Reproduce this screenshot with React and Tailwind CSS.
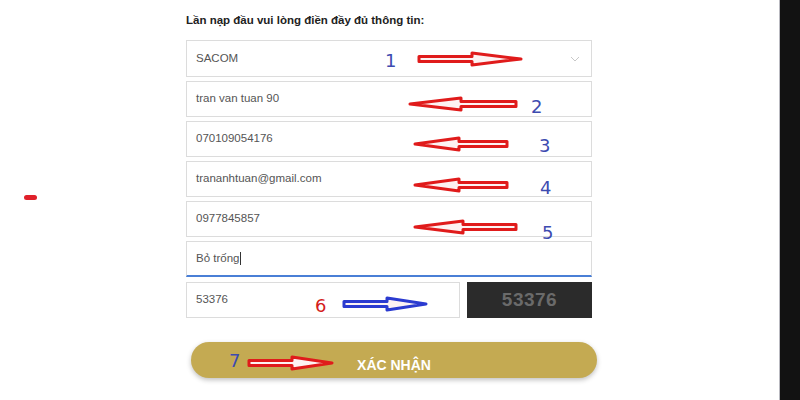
import React from 'react'

function Arrow({ dir = 'right', color = '#e01b1b', width = 105, className = '' }) {
  const w = width
  const head = Math.round(w * 0.48)
  // right-pointing shape, mirrored for left
  const pts = [
    [2, 5.5],
    [w - head, 5.5],
    [w - head, 2],
    [w - 2, 8],
    [w - head, 14],
    [w - head, 10.5],
    [2, 10.5],
  ]
  const points = pts
    .map(([x, y]) => (dir === 'right' ? `${x},${y}` : `${w - x},${y}`))
    .join(' ')
  return (
    <svg width={w} height="16" viewBox={`0 0 ${w} 16`} className={className}>
      <polygon points={points} fill="#fdf3f3" stroke={color} strokeWidth="3" strokeLinejoin="round" />
    </svg>
  )
}

function Field({ value }) {
  return (
    <div className="h-[36px] flex items-center px-[9px] border border-[#dcdcdc] bg-white text-[11.5px] text-[#555]">
      {value}
    </div>
  )
}

export default function App() {
  return (
    <div
      className="relative w-[800px] h-[400px] bg-white overflow-hidden flex"
      style={{ fontFamily: '"Liberation Sans", Arial, sans-serif' }}
    >
      <div className="flex-1 pl-[186px] pt-[12px]">
        <div className="w-[406px]">
          <p className="text-[11.5px] font-bold text-[#222] h-[28px] leading-[16px]">
            Lần nạp đầu vui lòng điền đầy đủ thông tin:
          </p>
          <div className="flex flex-col gap-[4px]">
            <div className="h-[37px] flex items-center justify-between px-[9px] border border-[#dcdcdc] text-[11.5px] text-[#555]">
              <span>SACOM</span>
              <svg width="10" height="6" viewBox="0 0 10 6" className="mr-[2px]">
                <path d="M1 1l4 4 4-4" fill="none" stroke="#c8c8c8" strokeWidth="1" />
              </svg>
            </div>
            <Field value="tran van tuan 90" />
            <Field value="070109054176" />
            <Field value="trananhtuan@gmail.com" />
            <Field value="0977845857" />
            <div className="h-[36px] flex items-center px-[9px] border border-[#dcdcdc] border-b-2 border-b-[#4a7fd6] text-[11.5px] text-[#555]">
              <span>Bỏ trống</span>
              <span className="w-px h-[13px] bg-[#333] ml-px" />
            </div>
            <div className="flex gap-[7px] mt-[1px]">
              <div className="w-[274px] h-[36px] flex items-center px-[9px] border border-[#dcdcdc] text-[11.5px] text-[#555]">
                53376
              </div>
              <div className="flex-1 h-[36px] bg-[#2b2b2b] flex items-center justify-center text-[19px] font-bold text-[#6a6a6a] tracking-[0.5px]">
                53376
              </div>
            </div>
          </div>
          <button className="mt-[24px] ml-[5px] w-[406px] h-[36px] pt-[11px] rounded-full bg-[#c4aa52] shadow-[0_2px_5px_rgba(0,0,0,0.25)] text-white text-[14px] font-bold flex items-center justify-center">
            XÁC NHẬN
          </button>
        </div>
      </div>
      <div className="w-[21px] h-full bg-[#121212] border-l border-[#b9b9c0]" />

      {/* annotations drawn over the form */}
      <div className="absolute inset-0 pointer-events-none text-[#3d4bb0] text-[18px]" style={{ fontFamily: '"DejaVu Sans", sans-serif' }}>
        <Arrow dir="right" width={106} className="absolute left-[417px] top-[51px]" />
        <span className="absolute left-[385px] top-[47px]">1</span>
        <Arrow dir="left" width={110} className="absolute left-[408px] top-[96px]" />
        <span className="absolute left-[531px] top-[93px]">2</span>
        <Arrow dir="left" width={96} className="absolute left-[413px] top-[136px]" />
        <span className="absolute left-[539px] top-[132px]">3</span>
        <Arrow dir="left" width={96} className="absolute left-[413px] top-[177px]" />
        <span className="absolute left-[540px] top-[174px]">4</span>
        <Arrow dir="left" width={105} className="absolute left-[413px] top-[219px]" />
        <span className="absolute left-[542px] top-[219px]">5</span>
        <Arrow dir="right" width={86} color="#2b3bd0" className="absolute left-[342px] top-[296px]" />
        <span className="absolute left-[315px] top-[292px] text-[#d42020]">6</span>
        <Arrow dir="right" width={87} className="absolute left-[247px] top-[355px]" />
        <span className="absolute left-[229px] top-[347px]">7</span>
        <span className="absolute left-[24px] top-[195px] w-[13px] h-[5px] rounded-full bg-[#e0202a]" />
      </div>
    </div>
  )
}
